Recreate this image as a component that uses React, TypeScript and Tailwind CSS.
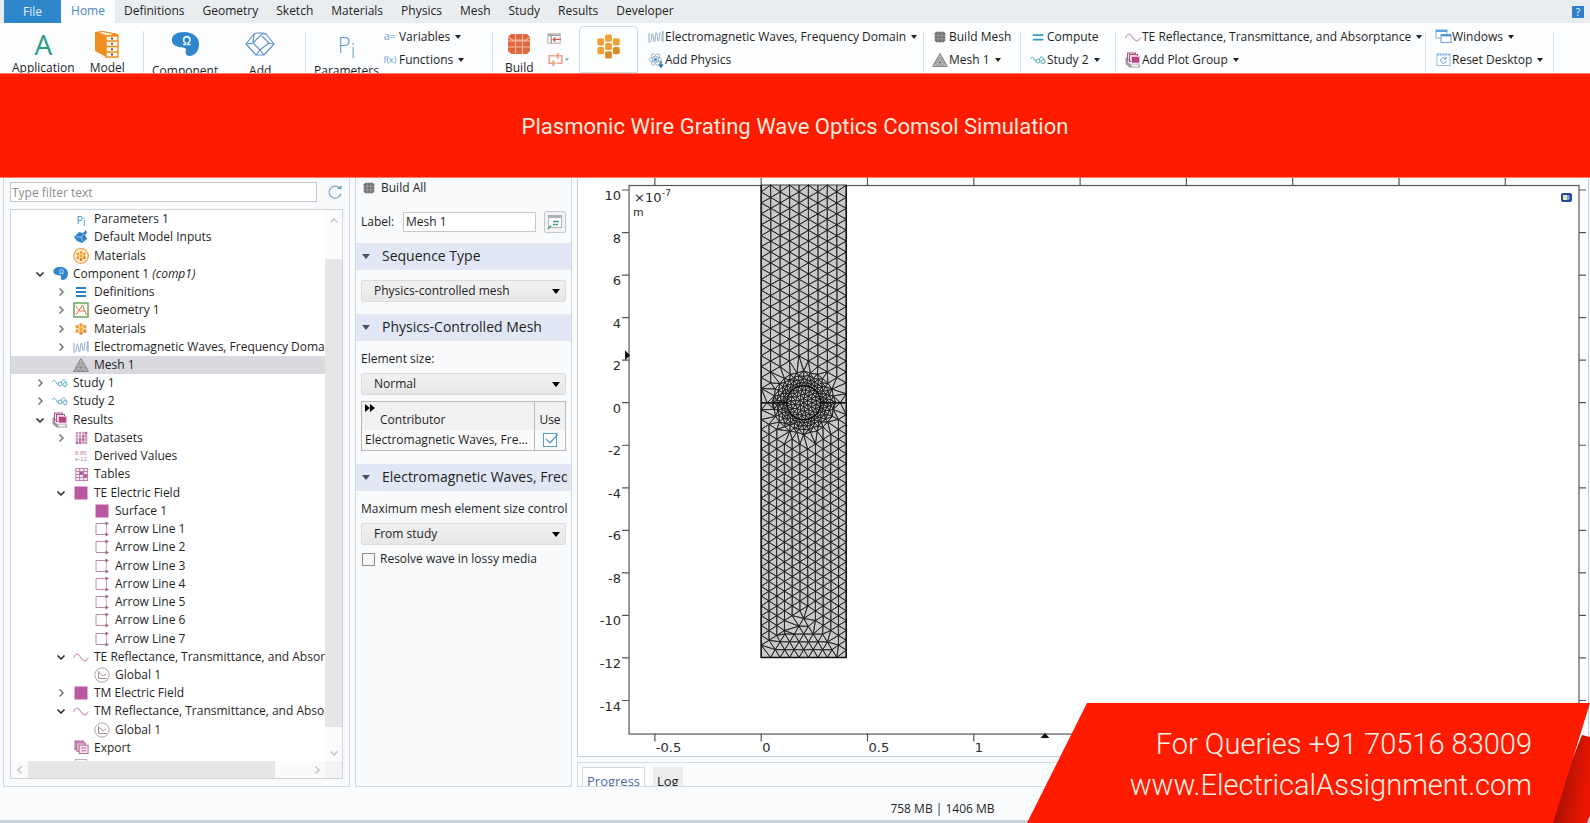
import { useMemo, useState } from "react";
import type { ReactNode } from "react";

type Pt = [number, number];
type Tri = [number, number, number];

/* ---------- icons ---------- */

function Svg({ size = 16, box = 16, children }: { size?: number; box?: number; children: ReactNode }) {
  return (
    <svg width={size} height={size} viewBox={`0 0 ${box} ${box}`} fill="none" className="shrink-0" aria-hidden="true">
      {children}
    </svg>
  );
}

const HEX: Pt[] = [[3, 5], [8, 2.6], [13, 5], [3, 10.6], [8, 8], [13, 10.6], [8, 13.4]];

const DrawerIcon = () => (
  <Svg size={28} box={28}>
    <path d="M2 2 L9 1 L25 4 L25 27 L13 27 L2 21 Z" fill="#ef8f1f" />
    <path d="M5 2.5 L9 1.5 L23 4 L14 6 Z" fill="#fff3e0" stroke="#ef8f1f" />
    <path d="M13 6 H25 V27 H13 Z" fill="#fff7ec" stroke="#ef8f1f" strokeWidth="1.4" />
    <path d="M13 11 H25 M13 16.5 H25 M13 22 H25" stroke="#ef8f1f" strokeWidth="1.4" />
    <path d="M18 8.5 h2 M18 13.8 h2 M18 19.3 h2 M18 24.6 h2" stroke="#8a4a3a" strokeWidth="2" />
  </Svg>
);

const BlobIcon = ({ size = 16 }: { size?: number }) => (
  <Svg size={size} box={28}>
    <path
      d="M1 11 C0 5 6 2 13 2 C22 2 28 7 28 14 C28 20 25 25 19 26 C15 26 14 23 15 20 C15 17 12 18 8 17 C4 16 1 14 1 11 Z"
      fill="#2f86cd"
    />
    <path
      d="M12 14.5 h2.6 v-1.4 c-1.6-.8-2-2-2-3.2 c0-2 1.4-3.3 3.2-3.3 s3.2 1.3 3.2 3.3 c0 1.2-.4 2.4-2 3.2 v1.4 h2.6"
      stroke="#e6f2fb"
      strokeWidth="1.6"
    />
  </Svg>
);

const AddComponentIcon = () => (
  <Svg size={30} box={30}>
    <g stroke="#5f93cc" strokeWidth="1.2" strokeLinejoin="round">
      <path d="M1 15 L9 5 L12 4 H18 L21 5 L29 15 L19 26 H11 Z" />
      <path d="M1 15 L8 14 L17 5 L21 5 M8 14 L15 21 L24 14 L17 7 M15 21 L11 26 M24 14 L29 15 M15 21 L19 26 M8 14 L9 5" />
    </g>
  </Svg>
);

const BuildIcon = () => (
  <Svg size={24} box={24}>
    <path d="M4 2 H20 L23 5 V19 L20 22 H4 L1 19 V5 Z" fill="#e0683f" />
    <path d="M1 9 H23 M1 15 H23 M8.5 2 V22 M15.5 2 V22 M1 5 L5 8 H19 L23 5" stroke="#f7b79c" strokeWidth="1.1" />
  </Svg>
);

const MaterialsIcon = ({ size = 16, ring = false }: { size?: number; ring?: boolean }) => (
  <Svg size={size}>
    {ring && <circle cx="8" cy="8" r="7.3" stroke="#efa043" strokeWidth="1.3" fill="#fff6e8" />}
    <g transform={ring ? "translate(2.7 2.7) scale(.66)" : undefined}>
      {HEX.map(([x, y], i) => (
        <rect key={i} x={x - 2.2} y={y - 2.3} width="4.4" height="4.6" rx="1.2" fill={i > 4 ? "#dd8a26" : "#f2a035"} />
      ))}
    </g>
  </Svg>
);

const WaveIcon = () => (
  <Svg>
    <path
      d="M1 14 V4 M2.5 13 C3.5 13 3.2 5 4.3 5 S5.4 13 6.4 13 S7.3 4 8.4 4 S9.4 12 10.4 12 S11.4 3 12.4 3 M13.2 12 C14.2 12 14 3 15 2 V13"
      stroke="#8fa6c8"
      strokeWidth="1"
    />
  </Svg>
);

const AtomIcon = () => (
  <Svg>
    <g stroke="#8faabf" strokeWidth=".8">
      <ellipse cx="7.5" cy="7.5" rx="6.5" ry="2.6" />
      <ellipse cx="7.5" cy="7.5" rx="6.5" ry="2.6" transform="rotate(60 7.5 7.5)" />
      <ellipse cx="7.5" cy="7.5" rx="6.5" ry="2.6" transform="rotate(120 7.5 7.5)" />
    </g>
    <circle cx="7.5" cy="7.5" r="1.5" fill="#3b87c4" />
    <path d="M13 9 v6 M11 12.5 l2 2.5 l2-2.5" stroke="#2277a8" strokeWidth="1.4" />
  </Svg>
);

const CubeIcon = () => (
  <Svg size={12}>
    <path d="M3 1 H13 L15 3 V13 L13 15 H3 L1 13 V3 Z" fill="#737373" />
    <path d="M1 6 H15 M1 10.5 H15 M5.5 1 V15 M10.5 1 V15" stroke="#a9a9a9" strokeWidth=".9" />
  </Svg>
);

const MeshIcon = () => (
  <Svg>
    <path d="M8 1.5 L15.5 14.5 H.5 Z" fill="#b9b9b9" stroke="#858585" />
    <path d="M5.5 6 H10.5 M3 10.3 H13 M5.5 6 L10 14.5 M10.5 6 L6 14.5 M3 10.3 L5.5 14.5 M13 10.3 L10.5 14.5" stroke="#8b8b8b" strokeWidth=".8" />
  </Svg>
);

const StudyIcon = () => (
  <Svg>
    <path d="M.5 7 C1.5 4.5 3 4.5 4 7 S5.5 9 6.5 9" stroke="#5aa9c4" />
    <circle cx="8" cy="9" r="2" stroke="#5aa9c4" />
    <circle cx="13" cy="9.6" r="2" stroke="#5aa9c4" />
    <path d="M9.5 7.5 L10.5 5.2 C11 4.5 12 4.5 13 5.5 L14.5 8" stroke="#5aa9c4" />
  </Svg>
);

const EqualsIcon = () => (
  <Svg size={12}>
    <path d="M1 5.5 H15 M1 11.5 H15" stroke="#2f9fb4" strokeWidth="2.6" />
  </Svg>
);

const SineIcon = () => (
  <Svg>
    <path d="M.5 9 C2 4.5 5 4 7 7.5 S11.5 13 13.5 11 L15.5 8.5" stroke="#cf9fb4" strokeWidth="1.2" />
  </Svg>
);

const ResultsIcon = () => (
  <Svg>
    <path d="M.5 6 L3 4.5 V10 L6 12.5 H15 V15.5 H4.5 L.5 12 Z" fill="#9f9a9d" />
    <rect x="2.5" y="1" width="8" height="7" fill="#f6e3ee" stroke="#a6557f" />
    <rect x="4.5" y="2.5" width="8" height="7" fill="#f6e3ee" stroke="#a6557f" />
    <rect x="6.5" y="4.5" width="8" height="6.5" fill="#b4447f" stroke="#e6bfd3" />
    <path d="M6 13 H13 L14.5 14.5 H7 Z" fill="#fff" />
  </Svg>
);

const WindowsIcon = () => (
  <Svg size={17} box={17}>
    <rect x="1" y="2" width="11" height="8" fill="#fff" stroke="#7fb0dc" />
    <path d="M1 3 H12" stroke="#5f9fd8" strokeWidth="2" />
    <rect x="6" y="6.5" width="10" height="8" fill="#fff" stroke="#6f9fd0" />
    <path d="M6 7.5 H16" stroke="#4f8fce" strokeWidth="1.8" />
  </Svg>
);

const ResetIcon = () => (
  <Svg size={15}>
    <rect x="1" y="2" width="14" height="12.5" fill="#fff" stroke="#8fbbe0" />
    <path d="M1 3 H15" stroke="#8fbbe0" strokeWidth="2" strokeDasharray="2 1" />
    <path d="M10.5 7.2 A3 3 0 1 0 11 9.8 M10.8 5.2 V7.6 H8.6" stroke="#4f95d6" />
  </Svg>
);

const InputsIcon = () => (
  <Svg>
    <path d="M1 8 L6 3 L10 4 L13 1 L14 4 L12 6 L14 10 L9 14 L4 12 Z" fill="#2f80c6" />
    <path d="M3 8 L8 8 L11 5 M8 8 L10 12" stroke="#a9d0ee" strokeWidth=".9" />
  </Svg>
);

const DefinitionsIcon = () => (
  <Svg>
    <path d="M3 4 H13 M3 8 H13 M3 12 H13" stroke="#2f80c6" strokeWidth="2" />
  </Svg>
);

const GeometryIcon = () => (
  <Svg>
    <rect x="1" y="1" width="14" height="14" fill="#fffdf6" stroke="#5f9d55" strokeWidth="1.4" />
    <path d="M3 3.5 C3.5 6 5 8 7 8.5 M3 13 L9.5 3 L13.5 13 M6.5 9 H12" stroke="#d9764d" strokeWidth="1" />
  </Svg>
);

const DatasetsIcon = () => (
  <Svg size={14}>
    {[1, 4.6, 8.2, 11.8].map((y) =>
      [2, 5.6, 9.2, 12.4].map((x) => (
        <rect key={`${x}-${y}`} x={x} y={y} width="2.8" height="3" fill={(x + y) % 2 > 1 ? "#b5649b" : "#c995b8"} />
      ))
    )}
  </Svg>
);

const DerivedIcon = () => (
  <svg width="16" height="16" viewBox="0 0 16 16" className="shrink-0" aria-hidden="true">
    <g fontFamily="Liberation Sans, sans-serif" fontSize="6" fill="#b87f9f">
      <text x="2" y="7">8.85</text>
      <text x="2" y="13">e-12</text>
    </g>
  </svg>
);

const TablesIcon = () => (
  <Svg size={15}>
    <rect x="2" y="1.5" width="12.5" height="13" fill="#fbeff6" stroke="#b87aa0" />
    <path d="M2 4.7 H14.5 M2 8 H14.5 M2 11.3 H14.5 M6 1.5 V14.5 M10.4 1.5 V14.5" stroke="#b87aa0" />
    <path d="M6 6.4 H10 M10 9.6 H14" stroke="#b5579a" strokeWidth="2.4" />
  </Svg>
);

const SurfaceIcon = () => (
  <Svg>
    <rect x="1.5" y="1.5" width="13" height="13" fill="#b9589f" />
  </Svg>
);

const ArrowLineIcon = () => (
  <Svg>
    <path d="M13 2.5 H2 V13.5 H13" stroke="#b98ca1" />
    <path d="M12.5 3 V13" stroke="#d0aebd" />
    <path d="M11.5 .5 L15 2.5 L11.5 4.5 Z M11.5 11.5 L15 13.5 L11.5 15.5 Z" fill="#a8607f" />
  </Svg>
);

const GlobalIcon = () => (
  <Svg>
    <circle cx="8" cy="8" r="7.2" stroke="#b3a3ab" />
    <path d="M4.5 4 V11.5 H12.5 M5 6 C7 5 7.5 9.5 9.5 8.5 L12 7" stroke="#a58a97" />
  </Svg>
);

const ExportIcon = () => (
  <Svg size={15}>
    <rect x="1" y="1" width="9" height="9" fill="#d9a6c6" stroke="#a95f8e" />
    <rect x="3" y="3" width="9" height="9" fill="#e7c5da" stroke="#a95f8e" />
    <rect x="5.5" y="5.5" width="9.5" height="9" fill="#f7e6f0" stroke="#a95f8e" />
    <path d="M7.5 8.5 H13 M7.5 11.5 H13" stroke="#b5649b" />
  </Svg>
);

const PiIcon = () => <span className="text-[11px] leading-none text-[#4f93cf]">P<sub className="text-[10px]">i</sub></span>;

const Caret = () => <span className="ml-[5px] border-x-[3px] border-t-4 border-x-transparent border-t-[#222]" />;

/* ---------- ribbon ---------- */

const TABS = ["Definitions", "Geometry", "Sketch", "Materials", "Physics", "Mesh", "Study", "Results", "Developer"];

function TabBar() {
  return (
    <nav className="flex h-[23px] shrink-0 items-stretch bg-[#e9edef] leading-4">
      <button className="ml-1 w-[57px] bg-[#2e86cb] text-[#e9f3fb]">File</button>
      <button className="w-[54px] bg-[#fbfdfe] pb-[2px] text-[#4b87bf]">Home</button>
      <div className="flex gap-[18px] pb-[2px] pl-[9px]">
        {TABS.map((t) => (
          <button key={t}>{t}</button>
        ))}
      </div>
      <button className="mr-[6px] ml-auto h-3 w-3 self-center bg-[#2e7fc8] text-[10px] leading-3 text-white">?</button>
    </nav>
  );
}

function BigButton({ icon, label, low = false }: { icon: ReactNode; label: string; low?: boolean }) {
  return (
    <button className="flex flex-col items-center self-start">
      <span className="flex h-[26px] shrink-0 items-center">{icon}</span>
      <span className={low ? "mt-[6px] leading-4" : "mt-[3px] leading-4"}>{label}</span>
    </button>
  );
}

function SmallButton({ icon, label, caret = false }: { icon: ReactNode; label: string; caret?: boolean }) {
  return (
    <button className="flex h-[23px] items-center whitespace-nowrap">
      <span className="flex w-[18px] shrink-0 justify-center">{icon}</span>
      <span>{label}</span>
      {caret && <Caret />}
    </button>
  );
}

function Group({ width, children }: { width: string; children: ReactNode }) {
  return <div className={`mt-2 flex shrink-0 border-r border-[#dadfe3] ${width}`}>{children}</div>;
}

function Stack({ children }: { children: ReactNode }) {
  return <div className="-mt-[6px] flex flex-col">{children}</div>;
}

function Ribbon() {
  return (
    <div className="flex h-[50px] shrink-0 overflow-hidden bg-[#fbfdfe] pl-1">
      <Group width="w-[140px] gap-[15px] pl-2">
        <BigButton icon={<span className="text-[28px] leading-[26px] text-[#2b9c86]">A</span>} label="Application" />
        <BigButton icon={<DrawerIcon />} label="Model" />
      </Group>
      <Group width="w-[162px] gap-[27px] pl-2">
        <BigButton icon={<BlobIcon size={28} />} label="Component" low />
        <BigButton icon={<AddComponentIcon />} label="Add" low />
      </Group>
      <Group width="w-[187px] gap-[2px] pl-2">
        <BigButton icon={<span className="text-[22px] leading-none font-light text-[#5f9ad3]">P<sub className="text-[20px]">i</sub></span>} label="Parameters" low />
        <Stack>
          <SmallButton icon={<span className="text-[11px] text-[#6f9fd0]">a=</span>} label="Variables" caret />
          <SmallButton icon={<span className="text-[9px] text-[#6f9fd0]">f(x)</span>} label="Functions" caret />
        </Stack>
      </Group>
      <div className="mt-2 flex w-[86px] shrink-0 gap-[13px] pl-3">
        <BigButton icon={<BuildIcon />} label="Build" />
        <div className="flex flex-col">
          <button className="flex h-[14px] items-center" aria-label="Insert sequence">
            <Svg size={15}>
              <rect x="1" y="3" width="13" height="10" stroke="#b5a5a5" fill="#fff" />
              <path d="M1 4.5 H14 M4.5 4 V13" stroke="#9d9d9d" strokeWidth="1.5" />
              <path d="M15 9 H7 M9 6.5 L6.5 9 L9 11.5" stroke="#d65a4c" strokeWidth="1.4" />
            </Svg>
          </button>
          <button className="flex h-8 items-center" aria-label="Update geometry">
            <Svg size={17}>
              <path d="M7 4.5 H2 V11.5 H7 M5 9 L7.5 11.5 L5 14 M9 11.5 H14 V4.5 H9 M11 2 L8.5 4.5 L11 7" stroke="#eea08c" strokeWidth="1.4" />
            </Svg>
            <span className="ml-px border-x-2 border-t-[3px] border-x-transparent border-t-[#9bb0bb]" />
          </button>
        </div>
      </div>
      <button className="mt-[3px] flex w-[59px] shrink-0 flex-col items-center rounded-t border border-[#d5dade] bg-[#fdfefe]">
        <span className="mt-[7px] mb-px">
          <MaterialsIcon size={25} />
        </span>
        <span className="mt-3 leading-4">Materials</span>
      </button>
      <Group width="w-[286px] pl-[9px]">
        <Stack>
          <SmallButton icon={<WaveIcon />} label="Electromagnetic Waves, Frequency Domain" caret />
          <SmallButton icon={<AtomIcon />} label="Add Physics" />
        </Stack>
      </Group>
      <Group width="w-[97px] pl-[7px]">
        <Stack>
          <SmallButton icon={<CubeIcon />} label="Build Mesh" />
          <SmallButton icon={<MeshIcon />} label="Mesh 1" caret />
        </Stack>
      </Group>
      <Group width="w-[95px] pl-2">
        <Stack>
          <SmallButton icon={<EqualsIcon />} label="Compute" />
          <SmallButton icon={<StudyIcon />} label="Study 2" caret />
        </Stack>
      </Group>
      <Group width="w-[310px] pl-2">
        <Stack>
          <SmallButton icon={<SineIcon />} label="TE Reflectance, Transmittance, and Absorptance" caret />
          <SmallButton icon={<ResultsIcon />} label="Add Plot Group" caret />
        </Stack>
      </Group>
      <Group width="w-[128px] pl-2">
        <Stack>
          <SmallButton icon={<WindowsIcon />} label="Windows" caret />
          <SmallButton icon={<ResetIcon />} label="Reset Desktop" caret />
        </Stack>
      </Group>
    </div>
  );
}

/* ---------- model tree ---------- */

type Node = { level: 1 | 2 | 3; label: string; note?: string; icon: ReactNode; open?: boolean };

const INDENT = { 1: "pl-[19px]", 2: "pl-[40px]", 3: "pl-[61px]" };

const NODES: Node[] = [
  { level: 2, label: "Parameters 1", icon: <PiIcon /> },
  { level: 2, label: "Default Model Inputs", icon: <InputsIcon /> },
  { level: 2, label: "Materials", icon: <MaterialsIcon ring /> },
  { level: 1, label: "Component 1", note: "(comp1)", icon: <BlobIcon size={15} />, open: true },
  { level: 2, label: "Definitions", icon: <DefinitionsIcon />, open: false },
  { level: 2, label: "Geometry 1", icon: <GeometryIcon />, open: false },
  { level: 2, label: "Materials", icon: <MaterialsIcon size={12} />, open: false },
  { level: 2, label: "Electromagnetic Waves, Frequency Domain", icon: <WaveIcon />, open: false },
  { level: 2, label: "Mesh 1", icon: <MeshIcon /> },
  { level: 1, label: "Study 1", icon: <StudyIcon />, open: false },
  { level: 1, label: "Study 2", icon: <StudyIcon />, open: false },
  { level: 1, label: "Results", icon: <ResultsIcon />, open: true },
  { level: 2, label: "Datasets", icon: <DatasetsIcon />, open: false },
  { level: 2, label: "Derived Values", icon: <DerivedIcon /> },
  { level: 2, label: "Tables", icon: <TablesIcon /> },
  { level: 2, label: "TE Electric Field", icon: <SurfaceIcon />, open: true },
  { level: 3, label: "Surface 1", icon: <SurfaceIcon /> },
  { level: 3, label: "Arrow Line 1", icon: <ArrowLineIcon /> },
  { level: 3, label: "Arrow Line 2", icon: <ArrowLineIcon /> },
  { level: 3, label: "Arrow Line 3", icon: <ArrowLineIcon /> },
  { level: 3, label: "Arrow Line 4", icon: <ArrowLineIcon /> },
  { level: 3, label: "Arrow Line 5", icon: <ArrowLineIcon /> },
  { level: 3, label: "Arrow Line 6", icon: <ArrowLineIcon /> },
  { level: 3, label: "Arrow Line 7", icon: <ArrowLineIcon /> },
  { level: 2, label: "TE Reflectance, Transmittance, and Absorptance", icon: <SineIcon />, open: true },
  { level: 3, label: "Global 1", icon: <GlobalIcon /> },
  { level: 2, label: "TM Electric Field", icon: <SurfaceIcon />, open: false },
  { level: 2, label: "TM Reflectance, Transmittance, and Absorptance", icon: <SineIcon />, open: true },
  { level: 3, label: "Global 1", icon: <GlobalIcon /> },
  { level: 2, label: "Export", icon: <ExportIcon /> },
];

function Chevron({ open, faint = false, turn = "" }: { open?: boolean; faint?: boolean; turn?: string }) {
  return (
    <svg width="10" height="10" viewBox="0 0 10 10" fill="none" className={turn} aria-hidden="true">
      <path
        d={open ? "M1.5 3.5 L5 7 L8.5 3.5" : "M3.5 1.5 L7 5 L3.5 8.5"}
        stroke={faint ? "#c3c3c3" : open ? "#222" : "#777"}
        strokeWidth="1.5"
      />
    </svg>
  );
}

function ModelTree() {
  const [selected, setSelected] = useState(8);

  return (
    <section className="ml-[3px] flex w-[347px] shrink-0 flex-col border-x border-b border-[#cfd8e2] bg-[#f8fafc] px-[6px] pt-1 pb-[7px]">
      <div className="flex items-center">
        <input
          aria-label="Type filter text"
          placeholder="Type filter text"
          className="h-5 w-[308px] border border-[#c3c7cb] bg-white px-px placeholder:text-[#8d8d8d]"
        />
        <button className="ml-[10px]" aria-label="Refresh">
          <Svg>
            <path d="M13 4.6 A6 6 0 1 0 14 9.5" stroke="#7fa3c6" strokeWidth="1.2" />
            <path d="M10 4.8 H14.5 V1.5 Z" fill="#4d8fc9" />
          </Svg>
        </button>
      </div>
      <div className="mt-[7px] flex min-h-0 flex-1 flex-col border border-[#cfd4d9] bg-white">
        <div className="flex min-h-0 flex-1">
          <ul className="flex min-w-0 flex-1 flex-col overflow-hidden">
            {NODES.map((n, i) => (
              <li key={i} className={`flex min-h-0 flex-1 ${i === selected ? "bg-[#d8dae0]" : ""}`}>
                <button className={`flex w-full items-center text-left whitespace-nowrap ${INDENT[n.level]}`} onClick={() => setSelected(i)}>
                  <span className="flex w-5 shrink-0 justify-center">{n.open !== undefined && <Chevron open={n.open} />}</span>
                  <span className="mr-[3px] flex w-5 shrink-0 justify-center">{n.icon}</span>
                  <span className="leading-4">
                    {n.label} {n.note && <i>{n.note}</i>}
                  </span>
                </button>
              </li>
            ))}
            <li className="h-1 shrink-0 overflow-hidden pl-[64px]">
              <div className="mt-[2px] h-3 w-3 border border-[#b9a9b1]" />
            </li>
          </ul>
          <div className="flex w-[17px] shrink-0 flex-col items-center bg-[#fcfcfc]">
            <span className="flex h-[49px] pt-[6px]"><Chevron open faint turn="rotate-180" /></span>
            <span className="w-full flex-1 bg-[#e6e6e6]" />
            <span className="flex h-[34px] items-end pb-[3px]"><Chevron open faint /></span>
          </div>
        </div>
        <div className="flex h-[17px] shrink-0 items-center bg-[#fafafa]">
          <span className="flex w-[17px] justify-center"><Chevron faint turn="rotate-180" /></span>
          <span className="h-full w-[247px] bg-[#e6e6e6]" />
          <span className="ml-auto flex w-[17px] justify-center"><Chevron faint /></span>
          <span className="h-full w-[17px] bg-[#f3f3f3]" />
        </div>
      </div>
    </section>
  );
}

/* ---------- settings ---------- */

function SectionHeader({ title }: { title: string }) {
  return (
    <h2 className="flex h-[27px] items-center overflow-hidden bg-[#e1e7f4] pr-1 pl-[6px] text-[14px]">
      <span className="mr-3 shrink-0 border-x-4 border-t-[5px] border-x-transparent border-t-[#4a5160]" />
      <span className="overflow-hidden whitespace-nowrap">{title}</span>
    </h2>
  );
}

function DropDown({ id, label, options }: { id: string; label?: string; options: string[] }) {
  return (
    <div className="relative mx-[5px]">
      <select
        id={id}
        aria-label={label}
        className="h-[22px] w-full appearance-none rounded-xs border border-[#dcdcdc] bg-gradient-to-b from-[#f1f1f1] to-[#e7e7e7] pl-3"
      >
        {options.map((o) => (
          <option key={o}>{o}</option>
        ))}
      </select>
      <span className="pointer-events-none absolute top-[9px] right-[6px] border-x-4 border-t-[5px] border-x-transparent border-t-black" />
    </div>
  );
}

function Settings() {
  const [use, setUse] = useState(true);

  return (
    <section className="ml-[5px] w-[217px] shrink-0 overflow-hidden border-x border-b border-[#cfd8e2] bg-[#f8fafc]">
      <button className="mt-[2px] flex h-4 items-center gap-[6px] pl-[7px]">
        <CubeIcon />
        Build All
      </button>
      <div className="mt-[14px] flex h-[23px] items-center pr-[5px] pl-[5px]">
        <label htmlFor="mesh-label">Label:</label>
        <input id="mesh-label" defaultValue="Mesh 1" className="ml-auto h-5 w-[133px] border border-[#c5c9cd] bg-white px-[2px]" />
        <button className="ml-2 flex h-[22px] w-[22px] items-center justify-center rounded-xs border border-[#c5c9cd] bg-[#f1f1f1]" aria-label="Go to source">
          <Svg>
            <rect x="1.5" y="1.5" width="13" height="12" fill="#fff" stroke="#aab2b8" />
            <path d="M1.5 3 H14.5" stroke="#aab2b8" strokeWidth="2" />
            <path d="M6 7.5 H12 M6 10.5 H11 M1 15 L4 11.5" stroke="#3f9f88" strokeWidth="1.3" />
          </Svg>
        </button>
      </div>
      <div className="mt-[10px] mb-[10px]">
        <SectionHeader title="Sequence Type" />
      </div>
      <DropDown id="sequence" label="Sequence Type" options={["Physics-controlled mesh", "User-controlled mesh"]} />
      <div className="mt-3 mb-[10px]">
        <SectionHeader title="Physics-Controlled Mesh" />
      </div>
      <label htmlFor="size" className="mb-[6px] block pl-[5px] leading-4">Element size:</label>
      <DropDown id="size" options={["Normal", "Fine", "Coarse"]} />
      <table className="mx-[5px] mt-[6px] w-[205px] table-fixed border border-[#b9b9b9] bg-[#f1f1f1]">
        <thead>
          <tr className="h-7">
            <th className="w-[173px] border-r border-[#b9b9b9] p-0 text-left font-normal">
              <div className="flex flex-col pl-[3px] leading-4">
                <span className="flex h-2 items-end">
                  <span className="border-y-4 border-l-[5px] border-y-transparent border-l-black" />
                  <span className="border-y-4 border-l-[5px] border-y-transparent border-l-black" />
                </span>
                <span className="pl-[15px]">Contributor</span>
              </div>
            </th>
            <th className="p-0 pt-2 text-center leading-4 font-normal">Use</th>
          </tr>
        </thead>
        <tbody>
          <tr className="h-[21px] bg-[#fafafa]">
            <td className="truncate border-r border-[#b9b9b9] p-0 pl-[3px] leading-4">Electromagnetic Waves, Frequency Domain</td>
            <td className="p-0">
              <label className="relative mx-auto block h-[14px] w-[14px]">
                <input
                  type="checkbox"
                  aria-label="Use"
                  checked={use}
                  onChange={(e) => setUse(e.target.checked)}
                  className="block h-[14px] w-[14px] appearance-none border border-[#5b9bd5] bg-white"
                />
                {use && (
                  <svg width="16" height="14" viewBox="0 0 16 14" fill="none" className="pointer-events-none absolute top-0 left-0" aria-hidden="true">
                    <path d="M3 6 L7 10 L15 1" stroke="#5b9bd5" strokeWidth="1.4" />
                  </svg>
                )}
              </label>
            </td>
          </tr>
        </tbody>
      </table>
      <div className="mt-[13px] mb-[10px]">
        <SectionHeader title="Electromagnetic Waves, Frequency Domain" />
      </div>
      <label htmlFor="control" className="mb-[6px] block pl-[5px] leading-4 whitespace-nowrap">Maximum mesh element size control</label>
      <DropDown id="control" options={["From study", "User defined"]} />
      <label className="mt-[6px] flex items-center gap-[5px] pl-[6px] leading-4 whitespace-nowrap">
        <input type="checkbox" className="h-[13px] w-[13px] shrink-0 appearance-none border border-[#8c8c8c] bg-[#f6f6f6]" />
        Resolve wave in lossy media
      </label>
    </section>
  );
}

/* ---------- mesh plot ---------- */

const LEFT = 761;
const RIGHT = 846;
const TOP = 185;
const MID = 402.5;
const BOTTOM = 657;
const CX = 803.5;
const R = 17;

function meshPoints() {
  const pts: Pt[] = [];
  const add = (x: number, y: number) => {
    // tiny irregularity keeps four points off one circle
    const n = pts.length;
    const edge = x <= LEFT || x >= RIGHT || y === MID || y === BOTTOM || y === TOP;
    pts.push(edge ? [x, y] : [x + Math.sin(n * 12.9) * 0.12, y + Math.sin(n * 78.2) * 0.12]);
  };
  const nearWire = (x: number, y: number) => Math.hypot(x - CX, y - MID) < 37;
  const inFan = (x: number, y: number) => Math.abs(x - CX) < (y - 611) * 0.95;

  const dx = (RIGHT - LEFT) / 9;
  for (let c = 0; c <= 9; c++) {
    const x = LEFT + c * dx;
    add(x, TOP);
    for (let y = TOP + 7 + (c % 2) * 5.4; y < MID - 6; y += 10.9) if (!nearWire(x, y)) add(x, y);
  }
  const bx = (RIGHT - LEFT) / 11;
  for (let c = 0; c <= 11; c++) {
    const x = LEFT + c * bx;
    for (let y = MID + 7 + (c % 2) * 4.9; y < BOTTOM - 6; y += 9.8) if (!nearWire(x, y) && !inFan(x, y)) add(x, y);
  }
  for (let k = 0; k < 6; k++) {
    const y = BOTTOM - k * 7.8;
    for (let i = 0; i <= 9; i++) {
      const x = LEFT + i * dx + (k % 2) * (dx / 2);
      if (x <= RIGHT && (k === 0 || inFan(x, y))) add(x, y);
    }
  }
  for (const x of [0, 6, 12, 17]) {
    add(LEFT + x, MID);
    add(RIGHT - x, MID);
  }
  const rings: Pt[] = [[0, 1], [4.2, 6], [8.4, 13], [12.7, 20], [R, 30], [20, 34], [23.4, 35], [27, 34], [31, 28]];
  rings.forEach(([r, count], k) => {
    for (let i = 0; i < count; i++) {
      const a = ((i + (k % 2) * 0.5) / count) * Math.PI * 2;
      // outer rings wobble so the refined patch fades unevenly into the lattice
      const rr = k > 5 ? r + Math.sin(i * 2.7 + k) * 0.9 : r;
      add(CX + rr * Math.cos(a), MID + rr * Math.sin(a));
    }
  });
  return pts;
}

// Bowyer-Watson triangulation
function triangulate(points: Pt[]): string {
  const p: Pt[] = [...points, [-4000, -3000], [6000, -3000], [800, 7000]];
  const n = points.length;
  const circle = (t: Tri) => {
    const [ax, ay] = p[t[0]];
    const bx = p[t[1]][0] - ax;
    const by = p[t[1]][1] - ay;
    const cx = p[t[2]][0] - ax;
    const cy = p[t[2]][1] - ay;
    const d = 2 * (bx * cy - by * cx);
    const ux = (cy * (bx * bx + by * by) - by * (cx * cx + cy * cy)) / d;
    const uy = (bx * (cx * cx + cy * cy) - cx * (bx * bx + by * by)) / d;
    return { t, x: ax + ux, y: ay + uy, r: ux * ux + uy * uy };
  };
  let tris = [circle([n, n + 1, n + 2])];
  for (let i = 0; i < n; i++) {
    const edges = new Map<string, Pt>();
    const keep: typeof tris = [];
    for (const c of tris) {
      if ((p[i][0] - c.x) ** 2 + (p[i][1] - c.y) ** 2 >= c.r) {
        keep.push(c);
        continue;
      }
      for (let e = 0; e < 3; e++) {
        const a = c.t[e];
        const b = c.t[(e + 1) % 3];
        const key = a < b ? `${a}-${b}` : `${b}-${a}`;
        if (edges.has(key)) edges.delete(key);
        else edges.set(key, [a, b]);
      }
    }
    edges.forEach(([a, b]) => {
      const cross = (p[a][0] - p[i][0]) * (p[b][1] - p[i][1]) - (p[a][1] - p[i][1]) * (p[b][0] - p[i][0]);
      if (Math.abs(cross) > 1e-6) keep.push(circle([a, b, i]));
    });
    tris = keep;
  }
  return tris
    .filter((c) => c.t.every((v) => v < n))
    .map((c) => "M" + c.t.map((v) => `${p[v][0].toFixed(1)} ${p[v][1].toFixed(1)}`).join("L") + "Z")
    .join("");
}

const X_TICKS = [-0.5, 0, 0.5, 1, 1.5, 2, 2.5, 3, 3.5];
const X_LABELS = [-0.5, 0, 0.5, 1];
const Y_TICKS = [10, 8, 6, 4, 2, 0, -2, -4, -6, -8, -10, -12, -14];
const px = (v: number) => LEFT + v * 212.4;
const py = (v: number) => MID - v * 21.25;

function MeshPlot() {
  const mesh = useMemo(() => triangulate(meshPoints()), []);

  return (
    <svg viewBox="578 178 1009 577" preserveAspectRatio="xMinYMin meet" className="block h-full w-full" role="img" aria-label="Mesh 1">
      <rect x="629" y="185.5" width="949" height="548" fill="none" stroke="#555" strokeWidth="1.2" />
      <g stroke="#555" strokeWidth="1.2">
        {X_TICKS.map((v) => (
          <path key={v} d={`M${px(v)} 177 V185 M${px(v)} 733 V741`} />
        ))}
        {Y_TICKS.map((v) => (
          <path key={v} d={`M622 ${py(v)} H629 M1578 ${py(v)} H1585`} />
        ))}
      </g>
      <g fontFamily="DejaVu Sans, sans-serif" fontSize="13" fill="#2a2a2a">
        {Y_TICKS.map((v) => (
          <text key={v} x="621" y={py(v) + 10} textAnchor="end">{v}</text>
        ))}
        {X_LABELS.map((v) => (
          <text key={v} x={px(v) + 1} y="751">{v}</text>
        ))}
        <text x="634" y="202">×10</text>
        <text x="662" y="196" fontSize="9">-7</text>
        <text x="633" y="216" fontSize="11">m</text>
      </g>
      <path d="M625 350 L630 355 L625 360 Z M1040 737.5 L1044.5 732.5 L1049 737.5 Z" fill="#111" />
      <rect x={LEFT} y={TOP} width={RIGHT - LEFT} height={BOTTOM - TOP} fill="#c9c9c9" />
      <path d={mesh} fill="none" stroke="#202020" strokeWidth=".8" strokeLinejoin="round" />
      <path d={`M${LEFT} ${TOP} V${BOTTOM} H${RIGHT} V${TOP} M${LEFT} ${MID} H${CX - R} M${CX + R} ${MID} H${RIGHT}`} fill="none" stroke="#111" strokeWidth="1.5" />
      <circle cx={CX} cy={MID} r={R} fill="none" stroke="#0c0c0c" strokeWidth="1.4" />
      <rect x="1560" y="193" width="11" height="9" rx="2" fill="#26479a" />
      <rect x="1562" y="195" width="4" height="5" fill="#dfe9b8" />
      <path d="M1566 195 h2 l1 2.5 l-1 2.5 h-2 Z" fill="#7da7dc" />
    </svg>
  );
}

function Graphics() {
  return (
    <section className="mr-px ml-[5px] flex min-w-0 flex-1 flex-col">
      <div className="min-h-0 flex-1 border-x border-b border-[#bccddb] bg-white">
        <MeshPlot />
      </div>
      <div className="mt-[5px] flex h-[25px] shrink-0 items-start overflow-hidden border border-[#d3dbe3] pt-1 pl-1 text-[13px]">
        <button className="h-7 border border-[#cfd8e2] bg-white px-1 leading-[26px] text-[#4d6c9c]">Progress</button>
        <button className="ml-2 h-7 bg-[#ececec] px-1 leading-[26px]">Log</button>
      </div>
    </section>
  );
}

/* ---------- promotional overlay ---------- */

function ContactCard() {
  return (
    <aside className="absolute right-0 bottom-0 h-[120px] w-[563px] font-[Roboto,sans-serif]">
      <svg viewBox="0 0 563 120" className="absolute inset-0" aria-hidden="true">
        <defs>
          <linearGradient id="fold" x1="0" y1="0" x2="1" y2="0.3">
            <stop offset="0" stopColor="#7d0d02" />
            <stop offset="1" stopColor="#e81602" />
          </linearGradient>
        </defs>
        <path d="M555 32 L563 34 V113 L560 120 H520 Z" fill="url(#fold)" />
        <path d="M60 0 H563 L526 120 H0 Z" fill="#ff1b00" />
      </svg>
      <div className="relative pt-[21px] pr-[58px] text-right text-[29px] leading-[41px] font-light whitespace-nowrap text-[#fff1e8]">
        <p>For Queries +91 70516 83009</p>
        <p>www.ElectricalAssignment.com</p>
      </div>
    </aside>
  );
}

export default function App() {
  return (
    <div className="relative flex h-screen flex-col overflow-hidden bg-[#f9fbfc] font-['Open_Sans','Noto_Sans',sans-serif] text-xs text-[#1f1f1f]">
      <TabBar />
      <Ribbon />
      <header className="flex h-[105px] shrink-0 items-center justify-center border-y border-[#ff7a6b] bg-[#ff1b00] pt-[2px]">
        <h1 className="font-[Roboto,sans-serif] text-[22px] text-[#ffe9dc]">
          Plasmonic Wire Grating Wave Optics Comsol Simulation
        </h1>
      </header>
      <main className="flex min-h-0 flex-1">
        <ModelTree />
        <Settings />
        <Graphics />
      </main>
      <footer className="flex h-9 shrink-0 items-center border-b-[3px] border-[#c6d3da] pt-[10px] pl-[56%]">
        758 MB | 1406 MB
      </footer>
      <ContactCard />
    </div>
  );
}
